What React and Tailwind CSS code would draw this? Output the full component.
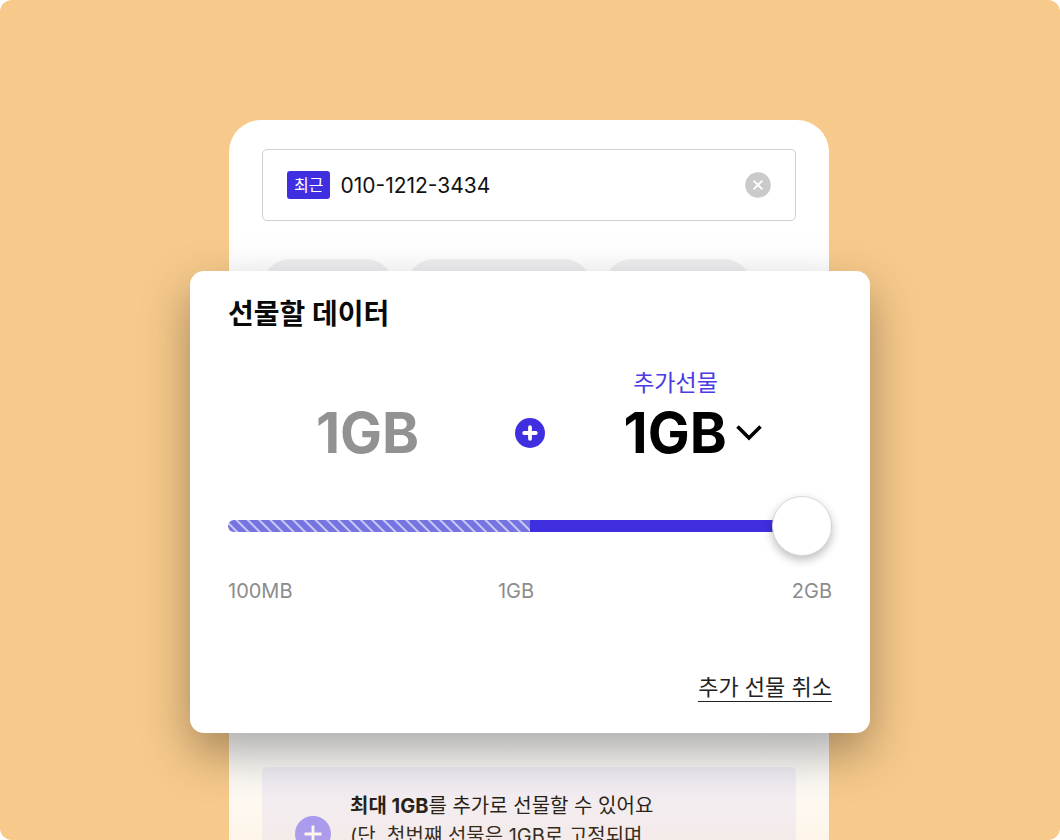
import React from "react";

function RecipientField() {
  return (
    <div className="flex h-[72px] items-center rounded-[5px] border-[1px] border-[#cfcfd1] bg-white px-6">
      <label
        htmlFor="recipient"
        className="flex h-7 shrink-0 items-center rounded-[3px] bg-[#3f2fe0] px-[7px] text-[16px] text-white"
      >
        최근
      </label>
      <input
        id="recipient"
        type="tel"
        defaultValue="010-1212-3434"
        className="ml-[10px] h-8 min-w-0 flex-1 bg-transparent text-[21px] text-[#111] outline-none"
      />
      <button type="button" className="shrink-0">
        <svg width="26" height="26" viewBox="0 0 26 26" fill="none">
          <circle cx="13" cy="13" r="12.8" fill="#cacaca" />
          <path d="M8.6 8.6l8.8 8.8M17.4 8.6l-8.8 8.8" stroke="#fff" strokeWidth="1.9" />
        </svg>
      </button>
    </div>
  );
}

function DataSlider() {
  return (
    <div>
      <input
        id="amount"
        type="range"
        min="0"
        max="20"
        defaultValue="20"
        className="block h-[60px] w-full cursor-pointer appearance-none bg-transparent outline-none [&::-webkit-slider-runnable-track]:h-3 [&::-webkit-slider-runnable-track]:rounded-full [&::-webkit-slider-runnable-track]:bg-[linear-gradient(90deg,transparent_50%,#3f2fe0_50%),repeating-linear-gradient(45deg,#7574e0_0px,#7574e0_5px,#c9c9f4_6px,#c9c9f4_7px,#7574e0_8px)] [&::-webkit-slider-thumb]:-mt-6 [&::-webkit-slider-thumb]:h-[60px] [&::-webkit-slider-thumb]:w-[60px] [&::-webkit-slider-thumb]:appearance-none [&::-webkit-slider-thumb]:rounded-full [&::-webkit-slider-thumb]:border-[1px] [&::-webkit-slider-thumb]:border-[#d9d9d9] [&::-webkit-slider-thumb]:bg-white [&::-webkit-slider-thumb]:shadow-[0_4px_10px_rgba(0,0,0,0.26)]"
      />
      <div className="mt-[23px] grid grid-cols-3 text-[20px] leading-6 text-[#8c8c8c]">
        <span>100MB</span>
        <span className="pr-7 text-center">1GB</span>
        <span className="text-right">2GB</span>
      </div>
    </div>
  );
}

function GiftPanel() {
  return (
    <section className="relative z-10 -mt-11 rounded-[14px] bg-white px-[38px] pt-[25px] pb-[31px] shadow-[0_20px_48px_rgba(0,0,0,0.34)]">
      <h2 className="text-[28px] leading-9 font-bold text-[#0a0a0a]">
        <label htmlFor="amount">선물할 데이터</label>
      </h2>

      <div className="mt-[37px] grid grid-cols-[1fr_auto_1fr] items-end">
        <p className="pr-2 text-center text-[56px] leading-[60px] font-bold text-[#929292]">1GB</p>
        <div className="flex h-[60px] items-center">
          <svg width="30" height="30" viewBox="0 0 30 30" fill="none">
            <circle cx="15" cy="15" r="15" fill="#3f2fe0" />
            <path d="M15 9.2v11.6M9.2 15h11.6" stroke="#fff" strokeWidth="3.8" strokeLinecap="round" />
          </svg>
        </div>
        <div className="flex flex-col items-center pl-2">
          <label htmlFor="extra" className="pr-[34px] text-[23px] leading-7 text-[#4a3be3]">
            추가선물
          </label>
          <div className="mt-[6px] flex items-center gap-2">
            <select
              id="extra"
              className="h-[60px] appearance-none bg-transparent text-[56px] leading-[60px] font-bold text-black outline-none"
            >
              <option>1GB</option>
            </select>
            <svg width="26" height="16" viewBox="0 0 26 16" fill="none">
              <path d="M1.5 1.5L13 13L24.5 1.5" stroke="#000" strokeWidth="3.6" />
            </svg>
          </div>
        </div>
      </div>

      <div className="mt-[33px]">
        <DataSlider />
      </div>

      <div className="mt-[70px] flex justify-end">
        <button
          type="button"
          className="border-b-[1px] border-[#222] text-[22px] leading-7 text-[#222]"
        >
          추가 선물 취소
        </button>
      </div>
    </section>
  );
}

function Notice() {
  return (
    <div className="flex rounded-[5px] bg-[#f3f2ff] py-6 pl-[33px]">
      <svg className="mt-[25px] shrink-0" width="36" height="36" viewBox="0 0 36 36" fill="none">
        <circle cx="18" cy="18" r="18" fill="#9c92ff" />
        <path d="M18 9.5v17M9.5 18h17" stroke="#fff" strokeWidth="2.8" />
      </svg>
      <p className="ml-[19px] text-[20px] leading-[30px] text-[#0c0a08]">
        <strong>최대 1GB</strong>를 추가로 선물할 수 있어요
        <br />
        (단, 첫번쨰 선물은 1GB로 고정되며
      </p>
    </div>
  );
}

export default function App() {
  return (
    <div className="h-screen bg-white font-['Inter','Noto_Sans_CJK_KR',sans-serif]">
      <main className="h-full overflow-hidden rounded-xl bg-[#f7ca8b] px-4 pt-[120px]">
        <div className="mx-auto max-w-[680px]">
          <div className="mr-[41px] ml-[39px] rounded-t-[32px] bg-white px-[33px] pt-[29px]">
            <RecipientField />
            <div className="mt-[38px] flex gap-3">
              <div className="h-14 w-[132px] rounded-full bg-[#f0f0f3]" />
              <div className="h-14 w-[186px] rounded-full bg-[#f0f0f3]" />
              <div className="h-14 w-[148px] rounded-full bg-[#f0f0f3]" />
            </div>
          </div>
          <GiftPanel />
          <div className="relative mr-[41px] ml-[39px] bg-white px-[33px] pt-[34px]">
            <Notice />
            <div className="pointer-events-none absolute inset-0 bg-linear-to-b from-[#f7ca8b]/0 to-[#f7ca8b]/25" />
          </div>
        </div>
      </main>
    </div>
  );
}
